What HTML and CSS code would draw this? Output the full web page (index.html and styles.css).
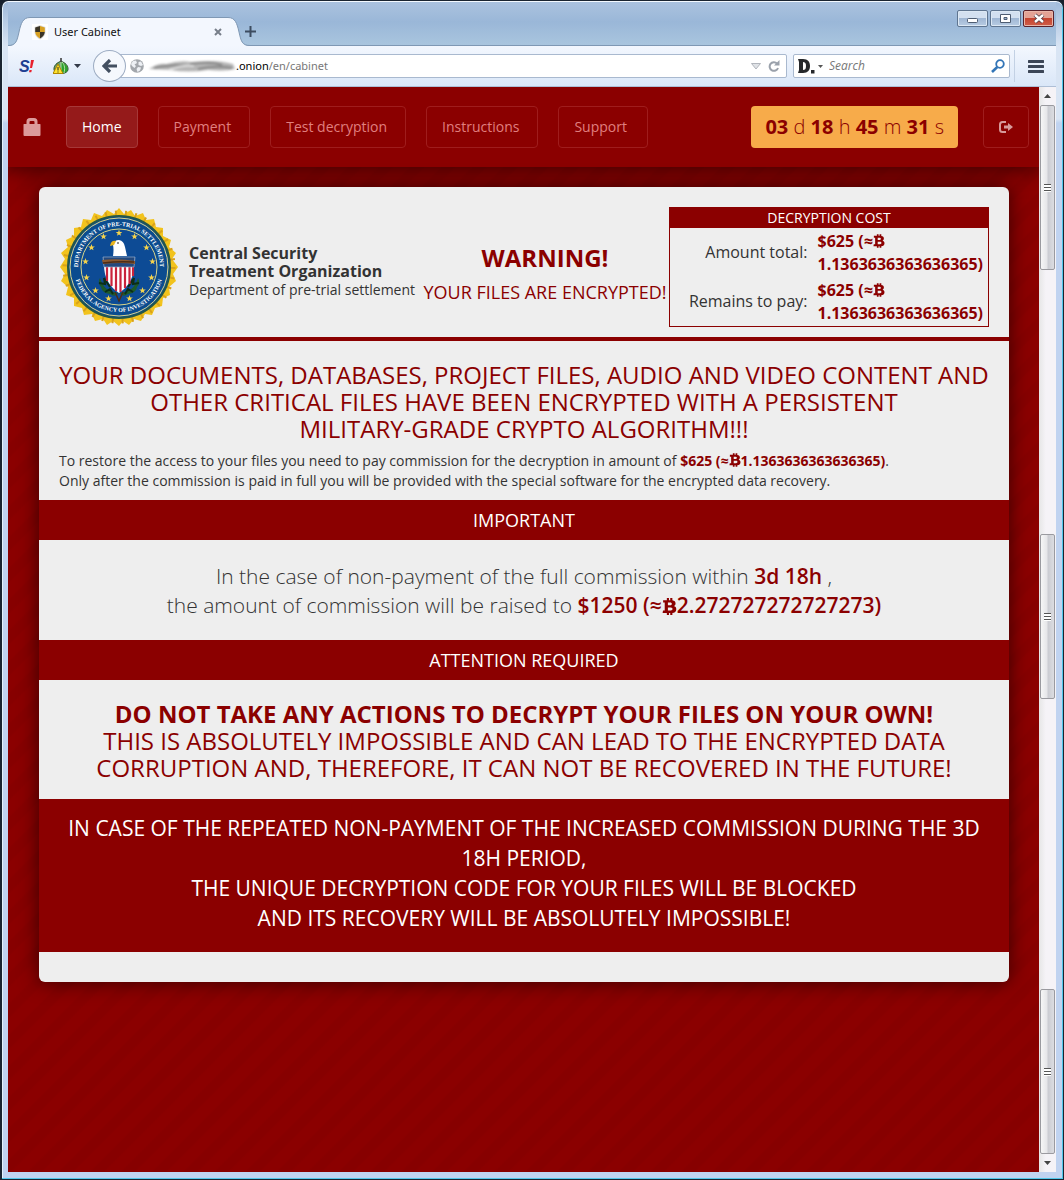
FILE: index.html
```
<!DOCTYPE html>
<html lang="en">
<head>
<meta charset="utf-8">
<title>User Cabinet</title>
<link rel="stylesheet" href="styles.css">
</head>
<body>
<svg class="defs" aria-hidden="true">
  <symbol id="btc" viewBox="0 0 14 16"><path fill-rule="evenodd" d="M1 2h3.500V0h2v2h1.200V0h2v2.200c2 .3 3 1.300 3 2.900 0 1.200-.6 2-1.600 2.500 1.500.4 2.300 1.400 2.300 2.900 0 2.200-1.500 3.300-3.700 3.500V16h-2v-2H6.500v2h-2v-2H.5l.4-2.200h1.600V4.200H1zM5.500 4.300v2.600h2.200c2 0 2-2.600 0-2.600zm0 4.700v2.800h2.700c2.200 0 2.200-2.800 0-2.800z"/></symbol>
  <symbol id="star" viewBox="-5 -5 10 10"><path d="M0-5 1.200-1.600 4.800-1.500 1.900.6 2.900 4 0 2-2.900 4-1.900.6-4.800-1.500-1.200-1.600z"/></symbol>
</svg>
<div class="window">
  <header class="titlebar">
    <div class="tab">
      <svg class="tab-edge" viewBox="0 0 22 29"><path class="tab-fill" d="M0 29C8 29 9 24 11 15S15 .5 22 .5V29z"/><path class="tab-line" d="M0 28.500C8 28.500 9 24 11 15S15 .5 22 .5"/></svg>
      <div class="tab-body">
        <svg width="16" height="16" viewBox="0 0 16 16"><rect width="16" height="16" fill="#fff"/><path d="M8 1 13.500 3v5c0 3.500-2.500 6-5.500 7.500C5 14 2.500 11.500 2.500 8V3z" fill="#ddd"/><path d="M8 2v6H3.200V3.500z M8 8h4.800c-.2 3-2 5-4.800 6.500z" fill="#3a3426"/><path d="M8 2v6h4.800V3.500z M8 8H3.200c.2 3 2 5 4.800 6.500z" fill="#d8a021"/></svg>
        <span class="tab-title">User Cabinet</span>
        <button class="icon-btn" aria-label="Close tab"><svg width="8" height="8" viewBox="0 0 8 8"><path d="M1 1 7 7M7 1 1 7" stroke="#777f8a" stroke-width="2"/></svg></button>
      </div>
      <svg class="tab-edge flip" viewBox="0 0 22 29"><path class="tab-fill" d="M0 29C8 29 9 24 11 15S15 .5 22 .5V29z"/><path class="tab-line" d="M0 28.500C8 28.500 9 24 11 15S15 .5 22 .5"/></svg>
    </div>
    <button class="icon-btn new-tab" aria-label="New tab"><svg width="11" height="11" viewBox="0 0 11 11"><path d="M5.500 0v11M0 5.500h11" stroke="#3d4c60" stroke-width="2"/></svg></button>
    <div class="controls">
      <button class="control" aria-label="Minimize"><svg width="11" height="11" viewBox="0 0 11 11"><rect x=".5" y="5.500" width="10" height="4" rx="1" fill="#fff" stroke="#4e5d72"/></svg></button>
      <button class="control" aria-label="Maximize"><svg width="11" height="11" viewBox="0 0 11 11"><path fill-rule="evenodd" d="M.5 1.500h10v8H.5zM4 4.500v2h3v-2z" fill="#fff" stroke="#4e5d72"/></svg></button>
      <button class="control close" aria-label="Close"><svg width="12" height="11" viewBox="0 0 12 11"><path d="m2 2 8 7m0-7-8 7" stroke="#4e3a44" stroke-width="4"/><path d="m2 2 8 7m0-7-8 7" stroke="#fff" stroke-width="2.400"/></svg></button>
    </div>
  </header>

  <div class="toolbar">
    <button class="icon-btn" aria-label="NoScript"><svg width="16" height="16" viewBox="0 0 16 16"><text x="0" y="14" class="s-blue">S</text><path d="m12 2h3l-2 8h-2zM10.500 12h2.300l-.5 2.300H10z" fill="#e8202c"/></svg></button>
    <button class="icon-btn onion" aria-label="Tor"><svg width="16" height="16" viewBox="0 0 16 16"><path d="M8 3c-4 2-7 4-7 8 0 3 3 4.500 7 4.500s7-1.500 7-4.500c0-4-3-6-7-8z" fill="#6f9f6c" stroke="#234d20"/><path d="M8 4c5 2 6.500 4 6.500 7s-3 4-6.500 4z" fill="#2da32c"/><path d="M8 2v13M9 4c3 3 3 7 2 11" stroke="#b5d8a8" fill="none"/><path d="M8 0v4" stroke="#333" stroke-width="1.500"/><path d="M5 6 10 15.500H0z" fill="#ffe32e" stroke="#b08600"/><path d="M5 9v3.500M5 13.500v1" stroke="#222"/></svg>
    <svg width="7" height="4" viewBox="0 0 7 4"><path d="M0 0h7L3.500 4z" fill="#333a48"/></svg></button>
    <form class="address">
      <button class="back" type="button" aria-label="Back"><svg width="16" height="14" viewBox="0 0 16 14"><path d="M8 1 2 7l6 6M3 7h12" fill="none" stroke="#434f60" stroke-width="3.200"/></svg></button>
      <svg width="14" height="14" viewBox="0 0 14 14"><circle cx="7" cy="7" r="6.800" fill="#a3a7ac"/><path d="M3 2 6 1.500 7 4 4.500 5.500 6 7 4.500 9 2 7 1 5zM8.500 3 11 2.500 13 6l-2 1-2.500-1zM8 8l3 .5-1 3-2.500 1.500L6.500 10z" fill="#edf0f4"/></svg>
      <svg class="smudge" width="88" height="14" viewBox="0 0 88 14"><path d="M1 10Q10 4 18 5q14-4 25-2l18-1q13 0 24 3l2 5q-10 3-27 1-20 3-38 0z" fill="#b5b5b5"/><path d="M6 9q20-4 35-2M42 5q20-3 32 1M50 10q18-4 34-1" stroke="#888" stroke-width="2" fill="none"/><path d="M21 11q12-5 25-4" stroke="#e0e0e0" stroke-width="2" fill="none"/></svg>
      <label class="host" for="url">.onion</label>
      <input id="url" class="field url" value="/en/cabinet">
      <svg width="10" height="7" viewBox="0 0 10 7"><path d="M.5.5h9L5 6z" fill="#dfe2e6" stroke="#b1b5bc"/></svg>
      <button class="icon-btn reload" type="button" aria-label="Reload"><svg width="12" height="12" viewBox="0 0 12 12"><path d="M9 3.500A4.300 4.300 0 1 0 10 8" fill="none" stroke="#9aa1ab" stroke-width="2"/><path d="M11.500 0v5.500H6z" fill="#9aa1ab"/></svg></button>
    </form>
    <form class="search">
      <svg width="18" height="15" viewBox="0 0 18 15"><path fill-rule="evenodd" d="M1 0h5c5 0 7 3 7 7s-2 7-7 7H1l1-3V3zM6 3v8c2 0 3-1 3-4S8 3 6 3z" fill="#26282b"/><path d="M14 11h3.500v3.500H14z" fill="#26282b"/></svg>
      <svg width="5" height="3" viewBox="0 0 5 3"><path d="M0 0h5L2.500 3z" fill="#555"/></svg>
      <input class="field query" placeholder="Search" aria-label="Search">
      <button class="icon-btn" type="button" aria-label="Go"><svg width="14" height="14" viewBox="0 0 14 14"><circle cx="9" cy="5" r="3.800" fill="none" stroke="#3275b7" stroke-width="1.800"/><path d="M6.300 8 1 13" stroke="#3275b7" stroke-width="2.600"/></svg></button>
    </form>
    <button class="icon-btn menu" aria-label="Menu"><svg width="16" height="13" viewBox="0 0 16 13"><path d="M1 1.500h14M1 6.500h14M1 11.500h14" stroke="#3c4657" stroke-width="3" stroke-linecap="round"/></svg></button>
  </div>

  <div class="viewport">
    <div class="page">
      <nav class="nav">
        <svg class="lock" width="18" height="18" viewBox="0 0 18 18"><path fill-rule="evenodd" d="M3.500 6V3.500Q3.500 0 7 0h4q3.500 0 3.500 3.500V6H17q.5 0 .5.500V17q0 1-1 1h-15q-1 0-1-1V6.500Q.5 6 1 6zM6.500 6h5V4q0-1-1-1h-3q-1 0-1 1z"/></svg>
        <a class="nav-link active" href="#home">Home</a>
        <a class="nav-link wide" href="#payment">Payment</a>
        <a class="nav-link wide" href="#test">Test decryption</a>
        <a class="nav-link wide" href="#instructions">Instructions</a>
        <a class="nav-link wide" href="#support">Support</a>
        <div class="timer"><b>03</b> d <b>18</b> h <b>45</b> m <b>31</b> s</div>
        <a class="nav-link" href="#logout" aria-label="Log out"><svg class="logout" width="14" height="14" viewBox="0 0 14 14"><path d="M7 2H3.500Q1 2 1 4.500v5Q1 12 3.500 12H7" fill="none" stroke="#d79a9a" stroke-width="2"/><path d="M5 5.500h4V3l5 4-5 4V8.500H5z" fill="#d79a9a"/></svg></a>
      </nav>

      <main class="card">
        <header class="intro">
          <svg class="seal" viewBox="0 0 120 120" role="img" aria-label="Seal">
            <path fill="#f2c31d" d="M60 1 65 7 72 3 76 9 84 6 87 13 95 12 97 20 104 21 104 29 112 33 110 40 117 46 113 52 119 60 114 67 117 74 110 80 111 88 104 91 103 99 96 101 93 108 86 107 82 114 75 112 70 118 64 114 60 119 54 114 48 118 44 112 36 114 33 107 25 108 23 101 15 99 15 91 7 88 9 80 2 74 6 67 1 60 6 52 2 46 9 40 7 33 15 29 15 21 22 20 24 12 32 13 35 6 43 9 48 3 55 7z"/>
            <circle cx="60" cy="60" r="54" fill="none" stroke="#d9a21a" stroke-width="5" stroke-dasharray="2 8"/>
            <circle cx="60" cy="60" r="51" fill="#0b4c8f" stroke="#24584b" stroke-width="2"/>
            <circle cx="60" cy="60" r="49" fill="none" stroke="#d9d58a" stroke-width="1"/>
            <circle cx="60" cy="60" r="38" fill="#0d4b95" stroke="#d9d58a" stroke-width="1"/>
            <path id="arc-top" d="M19 65A41 41 0 0 1 19 60 41 41 0 0 1 101 60 41 41 0 0 1 101 65" fill="none"/>
            <path id="arc-bottom" d="M15 60A45 45 0 0 0 105 60" fill="none"/>
            <text class="seal-text"><textPath href="#arc-top" startOffset="50%">DEPARTMENT OF PRE-TRIAL SETTLEMENT</textPath></text>
            <text class="seal-text"><textPath href="#arc-bottom" startOffset="50%">FEDERAL AGENCY OF INVESTIGATION</textPath></text>
            <g fill="#f6d44b">
              <use href="#star" x="56.500" y="22.500" width="7" height="7"/><use href="#star" x="72" y="26" width="7" height="7"/><use href="#star" x="84" y="37" width="7" height="7"/><use href="#star" x="90" y="51" width="7" height="7"/><use href="#star" x="89" y="67" width="7" height="7"/><use href="#star" x="80" y="80" width="7" height="7"/><use href="#star" x="67" y="88" width="7" height="7"/><use href="#star" x="46" y="88" width="7" height="7"/><use href="#star" x="33" y="80" width="7" height="7"/><use href="#star" x="24" y="67" width="7" height="7"/><use href="#star" x="23" y="51" width="7" height="7"/><use href="#star" x="29" y="37" width="7" height="7"/><use href="#star" x="41" y="26" width="7" height="7"/>
            </g>
            <path d="M41 71q4 14 18 15-3 5-8 1-8-1-9-7-4-4-1-9zM79 71q-4 14-18 15 3 5 8 1 8-1 9-7 4-4 1-9z" fill="#1d5a2b"/><path d="m40 76 6 1-1-6 6 9M46 85l5-3 3 5M80 76l-6 1 1-6-6 9M74 85l-5-3-3 5" fill="none" stroke="#0c2e17" stroke-width="2"/>
            <path d="M44 50h32l-1 8q0 18-15 28-15-10-15-28z" fill="#fff"/>
            <path d="M48 60v14M52.500 60v19M57 60v24M61.500 60v25M66 60v21M70.500 60v17M74 60v9" stroke="#c9233c" stroke-width="2.200"/>
            <path d="M44 50h32l-1 10H45z" fill="#23497e" stroke="#a9bdd6" stroke-width=".6"/>
            <path d="M54 49q1-7 0-11 1-5 6-5 5 1 6 7l2 9z" fill="#fff"/><path d="M57 34q-5-1-6 5l4-1z" fill="#eab51d"/><path d="M58 36h2" stroke="#222"/>
            <path d="M43 53q17-2 33 1v3q-15-2-32 0z" fill="#8a5930"/><path d="M44 56q15-2 31-1M56 85l4 9 4-9" stroke="#4b2c18" fill="none" stroke-width="1.500"/>
          </svg>
          <div class="org"><strong>Central Security<br>Treatment Organization</strong><span>Department of pre-trial settlement</span></div>
          <div class="warning"><strong>WARNING!</strong><span>YOUR FILES ARE ENCRYPTED!</span></div>
          <table class="cost">
            <thead><tr><th colspan="2">DECRYPTION COST</th></tr></thead>
            <tbody>
              <tr><td>Amount total:</td><td class="sum">$625 (≈<svg class="btc"><use href="#btc"/></svg><br>1.1363636363636365)</td></tr>
              <tr><td>Remains to pay:</td><td class="sum">$625 (≈<svg class="btc"><use href="#btc"/></svg><br>1.1363636363636365)</td></tr>
            </tbody>
          </table>
        </header>
        <section class="lead">
          <h1 class="headline">YOUR DOCUMENTS, DATABASES, PROJECT FILES, AUDIO AND VIDEO CONTENT AND OTHER CRITICAL FILES HAVE BEEN ENCRYPTED WITH A PERSISTENT <span class="nowrap">MILITARY-GRADE</span> CRYPTO ALGORITHM!!!</h1>
          <p>To restore the access to your files you need to pay commission for the decryption in amount of <b class="sum">$625 (≈<svg class="btc"><use href="#btc"/></svg>1.1363636363636365)</b>.<br>Only after the commission is paid in full you will be provided with the special software for the encrypted data recovery.</p>
        </section>
        <h2 class="band">IMPORTANT</h2>
        <p class="raise">In the case of non-payment of the full commission within <b class="sum">3d 18h</b> ,<br>the amount of commission will be raised to <b class="sum">$1250 (≈<svg class="btc"><use href="#btc"/></svg>2.272727272727273)</b></p>
        <h2 class="band">ATTENTION REQUIRED</h2>
        <p class="headline notice"><b>DO NOT TAKE ANY ACTIONS TO DECRYPT YOUR FILES ON YOUR OWN!</b><br>THIS IS ABSOLUTELY IMPOSSIBLE AND CAN LEAD TO THE ENCRYPTED DATA CORRUPTION AND, THEREFORE, IT CAN NOT BE RECOVERED IN THE FUTURE!</p>
        <p class="final">IN CASE OF THE REPEATED NON-PAYMENT OF THE INCREASED COMMISSION DURING THE 3D 18H PERIOD,<br>THE UNIQUE DECRYPTION CODE FOR YOUR FILES WILL BE BLOCKED<br>AND ITS RECOVERY WILL BE ABSOLUTELY IMPOSSIBLE!</p>
      </main>
    </div>
    <div class="scrollbar">
      <svg class="arrow" viewBox="0 0 17 18"><path d="M5 11h7L8.500 7z"/></svg>
      <div class="thumb"></div>
      <div class="track-upper"></div>
      <div class="thumb"></div>
      <div class="track-lower"></div>
      <div class="thumb"></div>
      <svg class="arrow" viewBox="0 0 17 18"><path d="M5 7h7l-3.500 4z"/></svg>
    </div>
  </div>
</div>
</body>
</html>
```
FILE: styles.css
```
* { box-sizing: border-box; }
body { margin: 0; background: #16202c; font-family: "Open Sans", "Noto Sans", sans-serif; font-size: 14px; line-height: 20px; color: #333; }
svg { display: block; flex: none; }
button { font: inherit; border: 0; padding: 0; background: none; }
h1, h2, p { margin: 0; font-weight: 400; }
.defs { position: absolute; width: 0; height: 0; }
.nowrap { white-space: nowrap; }

/* Window frame */
.window { min-height: 100vh; display: flex; flex-direction: column; padding: 0 7px 7px 6px; border: 1px solid #1a2430; border-left-width: 2px; border-radius: 8px 8px 0 0; background: linear-gradient(#9eb9d9 0, #d9e5f4 46px, #d9e5f4 118px, #c0d3f0 122px); box-shadow: inset 0 1px #f4f9ff, inset -1px -1px #4fc7ea, inset 1px 0 #e4f2fb; }
.titlebar { height: 44px; display: flex; align-items: flex-end; background: linear-gradient(#a9c1de 2px, #9ab7d8 20px, #a9c5de); border-bottom: 1px solid #7f98b4; margin-top: 1px; }
.tab { display: flex; margin-bottom: -1px; }
.tab-edge { width: 22px; height: 29px; }
.flip { transform: scaleX(-1); }
.tab-fill { fill: #f3f7fe; }
.tab-line { fill: none; stroke: #7f98b4; }
.tab-body { width: 198px; height: 29px; display: flex; align-items: center; gap: 6px; padding: 0 6px 0 2px; background: #f3f7fe; border-top: 1px solid #7f98b4; font-family: "Noto Sans", sans-serif; font-size: 11px; color: #111; }
.tab-title { flex: 1; }
.icon-btn { display: flex; align-items: center; }
.new-tab { margin: 0 0 8px -5px; }
.controls { display: flex; gap: 2px; margin-left: auto; align-self: flex-start; padding: 8px 2px 0; }
.control { width: 31px; height: 17px; display: flex; align-items: center; justify-content: center; border: 1px solid #5f7590; border-radius: 2px; background: linear-gradient(#d3e0f0 45%, #a0b7d4 50%, #b8cce3); box-shadow: inset 0 0 0 1px #dce8f4; }
.close { border-color: #59202a; background: linear-gradient(#e4a295 45%, #c64430 50%, #cf5d49); box-shadow: inset 0 0 0 1px #e9b6a9; }

.toolbar { height: 41px; display: flex; align-items: center; padding: 0 12px 0 11px; background: linear-gradient(#f3f7fe, #dae7f8); border-bottom: 1px solid #aebfd6; }
.s-blue { font: italic 700 16px "Liberation Sans", sans-serif; fill: #1d3f91; }
.onion { gap: 5px; margin: 0 13px 0 18px; }
.address { flex: 1; height: 24px; display: flex; align-items: center; gap: 4px; margin-left: 16px; padding-right: 6px; background: #fff; border: 1px solid #a9b9cf; border-radius: 2px; font-family: "Noto Sans", sans-serif; font-size: 11px; }
.back { width: 33px; height: 32px; flex: none; display: flex; align-items: center; justify-content: center; margin-left: -18px; border: 1px solid #9dacc2; border-radius: 50%; background: #f5f8fd; }
.smudge { filter: blur(1px); }
.host { margin-left: -4px; color: #000; }
.field { min-width: 0; flex: 1; border: 0; padding: 0; background: none; font: inherit; outline: 0; }
.url { margin-left: -4px; color: #777; }
.reload { margin-left: 3px; }
.search { width: 217px; height: 24px; display: flex; align-items: center; gap: 3px; margin-left: 6px; padding: 0 4px 0 3px; background: #fff; border: 1px solid #a9b9cf; border-radius: 2px; }
.query { margin-left: 3px; font-size: 12px; font-style: italic; }
.query::placeholder { color: #777; }
.menu { height: 32px; margin-left: 4px; padding-left: 13px; border-left: 1px solid #c3d1e4; }

/* Page */
.viewport { flex: 1; display: flex; }
.page { flex: 1; min-width: 0; background: repeating-linear-gradient(135deg, #8b0000 0, #8b0000 10px, #870000 12px, #870000 20px, #8b0000 22px); overflow: hidden; }
.nav { height: 80px; display: flex; align-items: center; gap: 20px; padding: 0 10px 0 15px; background: #8b0000; box-shadow: 0 2px 20px rgba(0, 0, 0, .6); }
.lock { fill: #dc9a9a; margin-right: 5px; }
.nav-link { height: 42px; padding: 10px 15px; border: 1px solid #9f1d1d; border-radius: 4px; color: #e07f7f; text-decoration: none; white-space: nowrap; }
.wide { min-width: 90px; padding-right: 18px; }
.active { background: #951a1a; border-color: #a63838; color: #fff; }
.logout { margin: 3px 0; }
.timer { margin: 0 5px 0 auto; padding: 0 14px; height: 42px; border-radius: 4px; background: #f7ab4a; color: #8b0000; font-size: 20px; line-height: 42px; font-weight: 300; white-space: nowrap; }
.timer b { font-weight: 700; }
.card { margin: 20px 30px 100px 31px; padding-bottom: 30px; background: #eee; border-radius: 6px; box-shadow: 0 0 20px rgba(0, 0, 0, .6); }
.intro { display: flex; padding: 20px 20px 10px; border-bottom: 4px solid #8b0000; }
.seal { width: 120px; height: 120px; }
.seal-text { font: 700 6px "Liberation Serif", serif; fill: #fff; text-anchor: middle; }
.org { min-width: 232px; margin: 37px 0 0 10px; white-space: nowrap; }
.org strong { display: block; font-size: 16px; line-height: 18px; font-weight: 700; }
.org span, .warning span, .warning strong { display: block; }
.warning { flex: 1; padding-top: 36px; color: #8b0000; text-align: center; white-space: nowrap; }
.warning strong { font-size: 24px; line-height: 30px; font-weight: 700; }
.warning span { margin-top: 9px; font-size: 18px; }
.cost { width: 320px; height: 120px; border: 1px solid #8b0000; border-spacing: 0; font-size: 16px; line-height: 23px; }
.cost th { padding: 0; background: #8b0000; color: #fff; font-size: 14px; line-height: 20px; font-weight: 400; }
.cost td { padding: 1px 5px; text-align: right; white-space: nowrap; }
.cost td.sum { text-align: left; width: 1px; }
.sum { color: #8b0000; font-weight: 700; }
.btc { display: inline-block; width: 12px; height: 14px; vertical-align: -1px; fill: #8b0000; }
.lead { padding: 20px 20px 9px; }
.headline { font-size: 24px; line-height: 27px; color: #8b0000; text-align: center; }
.lead p { margin-top: 9px; }
.band { padding: 10px 20px; background: #8b0000; color: #fff; font-size: 18px; line-height: 20px; text-align: center; }
.raise { padding: 22px 20px 20px; font-size: 21px; line-height: 29px; font-weight: 300; text-align: center; }
.raise b { font-weight: 600; }
.raise .btc { width: 15px; height: 17px; vertical-align: -2px; }
.notice { padding: 20px 20px 18px; }
.final { padding: 14px 20px 19px; background: #8b0000; color: #fff; font-size: 21px; line-height: 30px; text-align: center; }

.scrollbar { width: 17px; display: flex; flex-direction: column; background: linear-gradient(90deg, #e6e6e6, #f5f3f7 40%); }
.arrow { width: 17px; height: 18px; fill: #444; }
.thumb { height: 165px; margin: 0 1px; border: 1px solid #9a9a9f; border-radius: 2px; background-image: repeating-linear-gradient(#555 0 1px, #fff 1px 3px), linear-gradient(90deg, #f6f6f6, #e6e6e9 45%, #cbccd2 55%, #dcdde1); background-size: 7px 8px, auto; background-position: center; background-repeat: no-repeat; }
.track-upper { flex: 264; }
.track-lower { flex: 290; }
```
